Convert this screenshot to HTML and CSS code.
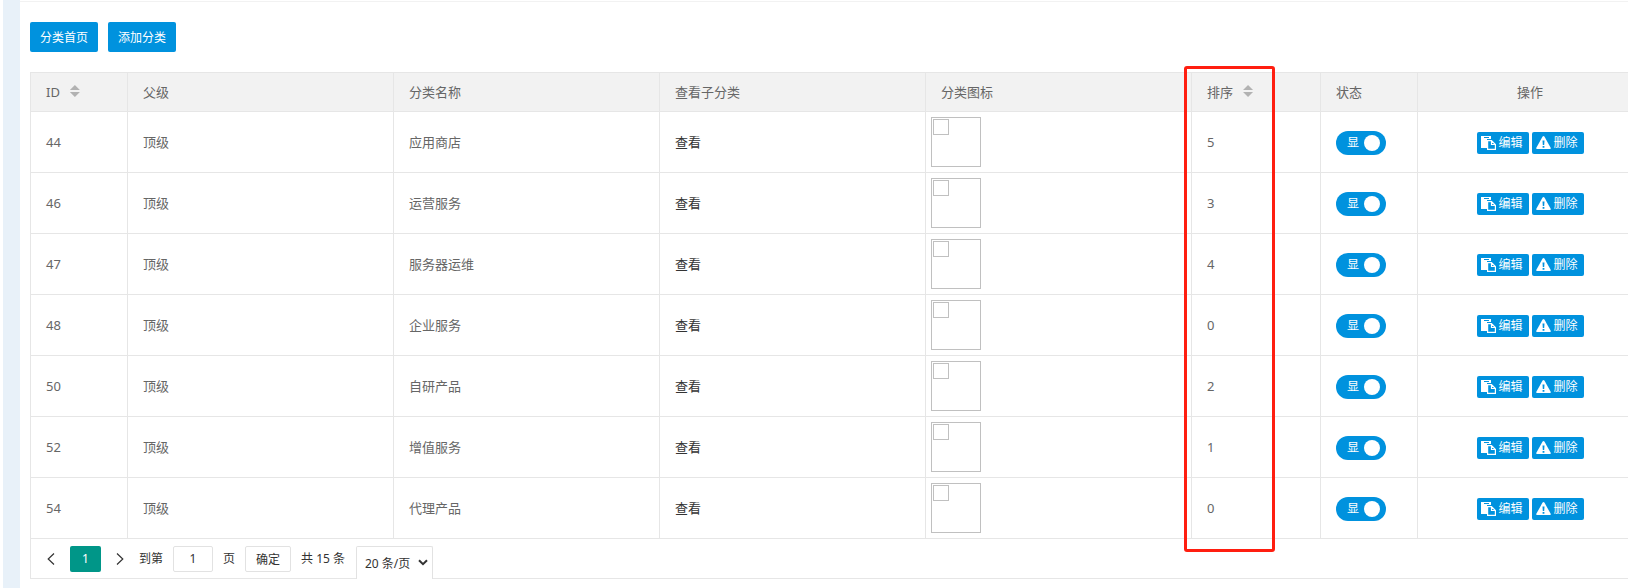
FILE: index.html
```html
<!DOCTYPE html>
<html lang="zh-CN">
<head>
<meta charset="utf-8">
<title>分类管理</title>
<link rel="stylesheet" href="styles.css">
</head>
<body>
<svg class="sprite" aria-hidden="true">
  <symbol id="paste" viewBox="0 0 15 14">
    <path fill="#fff" d="M0 0H10V3H6V12H0Z"/>
    <path fill="#0092de" d="M3 1H8V2H3Z"/>
    <path fill="none" stroke="#fff" stroke-width="1.2" d="M6.600 4.600H10.500L14.400 8.500V13.400H6.600ZM10.500 4.600V8.500H14.400"/>
  </symbol>
  <symbol id="warn" viewBox="0 0 15 14">
    <path fill="#fff" d="M6.600 .6Q7.500 -.5 8.400 .6L14.800 12Q15 13 14 13H1Q0 13 .2 12Z"/>
    <path fill="#0092de" d="M6.500 4.500H8.500L8.200 9H6.800ZM6.600 10H8.400V11.700H6.600Z"/>
  </symbol>
</svg>
<main class="page">
  <div class="toolbar">
    <button class="btn" type="button">分类首页</button>
    <button class="btn" type="button">添加分类</button>
  </div>
  <section class="grid">
    <table class="table">
      <colgroup><col class="c-id"><col class="c-text"><col class="c-text"><col class="c-text"><col class="c-text"><col class="c-sort"><col class="c-state"><col></colgroup>
      <thead>
        <tr><th>ID<span class="sort"></span></th><th>父级</th><th>分类名称</th><th>查看子分类</th><th>分类图标</th><th>排序<span class="sort"></span></th><th>状态</th><th class="ops">操作</th></tr>
      </thead>
      <tbody id="rows"></tbody>
    </table>
    <div class="pager">
      <button class="arrow" type="button" aria-label="上一页"><svg width="8" height="12" viewBox="0 0 8 12"><path d="M7 .5L1.200 6L7 11.500"/></svg></button>
      <button class="current" type="button">1</button>
      <button class="arrow next" type="button" aria-label="下一页"><svg width="8" height="12" viewBox="0 0 8 12"><path d="M1 .5L6.800 6L1 11.500"/></svg></button>
      <label class="jump">到第<input type="text" value="1">页</label>
      <button class="confirm" type="button">确定</button>
      <span class="total">共 15 条</span>
      <span class="limit"><select aria-label="每页条数"><option>20 条/页</option></select><svg width="10" height="7" viewBox="0 0 10 7"><path d="M1 1.200L5 5.200L9 1.200"/></svg></span>
    </div>
    <div class="highlight"></div>
  </section>
</main>
<script src="rows.js"></script>
</body>
</html>
```
FILE: rows.js
```js
const rows = [
  [44, '应用商店', 5],
  [46, '运营服务', 3],
  [47, '服务器运维', 4],
  [48, '企业服务', 0],
  [50, '自研产品', 2],
  [52, '增值服务', 1],
  [54, '代理产品', 0]
];
document.getElementById('rows').innerHTML = rows.map(([id, name, order]) => `
  <tr>
    <td>${id}</td><td>顶级</td><td>${name}</td>
    <td><a class="view" href="#">查看</a></td>
    <td class="pic"><div class="thumb"></div></td>
    <td>${order}</td>
    <td><label class="switch"><input type="checkbox" checked><span>显</span></label></td>
    <td class="ops"><div class="actions">
      <button class="mini" type="button"><svg width="15" height="14"><use href="#paste"/></svg>编辑</button>
      <button class="mini" type="button"><svg width="15" height="14"><use href="#warn"/></svg>删除</button>
    </div></td>
  </tr>`).join('');
```
FILE: styles.css
```css
*, ::before { box-sizing: border-box; }
body {
  margin: 0;
  padding-left: 3px;
  background: #fff;
  color: #666;
  font: 13px/20px "Noto Sans", "Noto Sans CJK SC", sans-serif;
}
button, input, select { font: inherit; margin: 0; }
.sprite { position: absolute; width: 0; height: 0; }
.page {
  min-height: 100vh;
  border-left: 17px solid #e8f1f9;
  padding: 22px 0 0 10px;
  overflow: hidden;
  background: linear-gradient(#f2f2f2, #f2f2f2) 0 1px / 100% 1px no-repeat;
}
.toolbar { display: flex; gap: 10px; margin-bottom: 20px; }
.btn {
  height: 30px;
  padding: 2px 10px 0;
  border: 0;
  border-radius: 2px;
  background: #0092de;
  color: #fff;
  font-size: 12px;
}
.grid {
  position: relative;
  width: calc(100% + 16px);
  border: 1px solid #e6e6e6;
}
.table { width: 100%; table-layout: fixed; border-collapse: separate; border-spacing: 0; }
.c-id, .c-state { width: 97px; }
.c-text { width: 266px; }
.c-sort { width: 129px; }
th, td {
  padding: 0 15px;
  border-right: 1px solid #e6e6e6;
  border-bottom: 1px solid #e6e6e6;
  text-align: left;
  font-weight: 400;
}
th { height: 39px; background: #f2f2f2; }
td { height: 61px; }
.ops { text-align: center; }
.sort {
  display: inline-block;
  width: 10px;
  height: 12px;
  margin-left: 10px;
  background: #b2b2b2;
  clip-path: polygon(50% 0, 100% 5px, 100% 7px, 50% 100%, 0 7px, 100% 7px, 100% 5px, 0 5px);
}
.view { color: #333; text-decoration: none; }
.pic { padding: 0 5px; }
.thumb { width: 50px; height: 50px; padding: 1px; border: 1px solid #c0c0c0; }
.thumb::before { content: ""; display: block; width: 16px; height: 16px; border: 1px solid #c0c0c0; }
.switch {
  display: flex;
  align-items: center;
  width: 50px;
  height: 24px;
  margin-top: 2px;
  padding: 0 6px 0 11px;
  border-radius: 12px;
  background: #0092de;
  color: #fff;
  font-size: 12px;
}
.switch input {
  order: 2;
  appearance: none;
  width: 16px;
  height: 16px;
  margin-left: auto;
  border-radius: 50%;
  background: #fff;
}
.actions { display: flex; justify-content: center; gap: 3px; margin-top: 2px; }
.mini {
  display: flex;
  align-items: center;
  gap: 3px;
  width: 52px;
  height: 22px;
  padding: 0 0 0 4px;
  border: 0;
  border-radius: 2px;
  background: #0092de;
  color: #fff;
  font-size: 12px;
}
.pager {
  display: flex;
  align-items: flex-start;
  height: 39px;
  padding: 7px 0 0 12px;
  color: #333;
  font-size: 12px;
  line-height: 26px;
}
.pager svg { fill: none; stroke: #333; stroke-width: 1.2; }
.arrow {
  display: grid;
  place-items: center;
  width: 16px;
  height: 26px;
  padding: 0;
  border: 0;
  background: none;
}
.current {
  width: 31px;
  height: 26px;
  margin: 0 11px;
  padding: 0;
  border: 0;
  border-radius: 2px;
  background: #009688;
  color: #fff;
}
.jump { display: flex; gap: 10px; margin: 0 10px 0 11px; }
.jump input {
  width: 40px;
  height: 26px;
  padding: 0;
  border: 1px solid #e2e2e2;
  border-radius: 2px;
  background: #fff;
  color: #333;
  text-align: center;
}
.confirm {
  width: 46px;
  height: 26px;
  padding: 2px 0 0;
  border: 1px solid #e2e2e2;
  border-radius: 2px;
  background: #fff;
  color: #333;
  line-height: 20px;
}
.total { margin: 0 11px 0 10px; }
.limit { position: relative; display: flex; align-items: center; }
.limit select {
  appearance: none;
  width: 77px;
  height: 33px;
  padding: 2px 8px 0;
  border: 1px solid #e2e2e2;
  border-bottom: 0;
  border-radius: 2px 2px 0 0;
  background: #fff;
  color: #333;
}
.limit svg { position: absolute; right: 5px; stroke-width: 2; pointer-events: none; }
.highlight {
  position: absolute;
  left: 1153px;
  top: -7px;
  bottom: 26px;
  width: 91px;
  border: 3px solid #ff1e10;
  border-radius: 3px;
  pointer-events: none;
}
```
